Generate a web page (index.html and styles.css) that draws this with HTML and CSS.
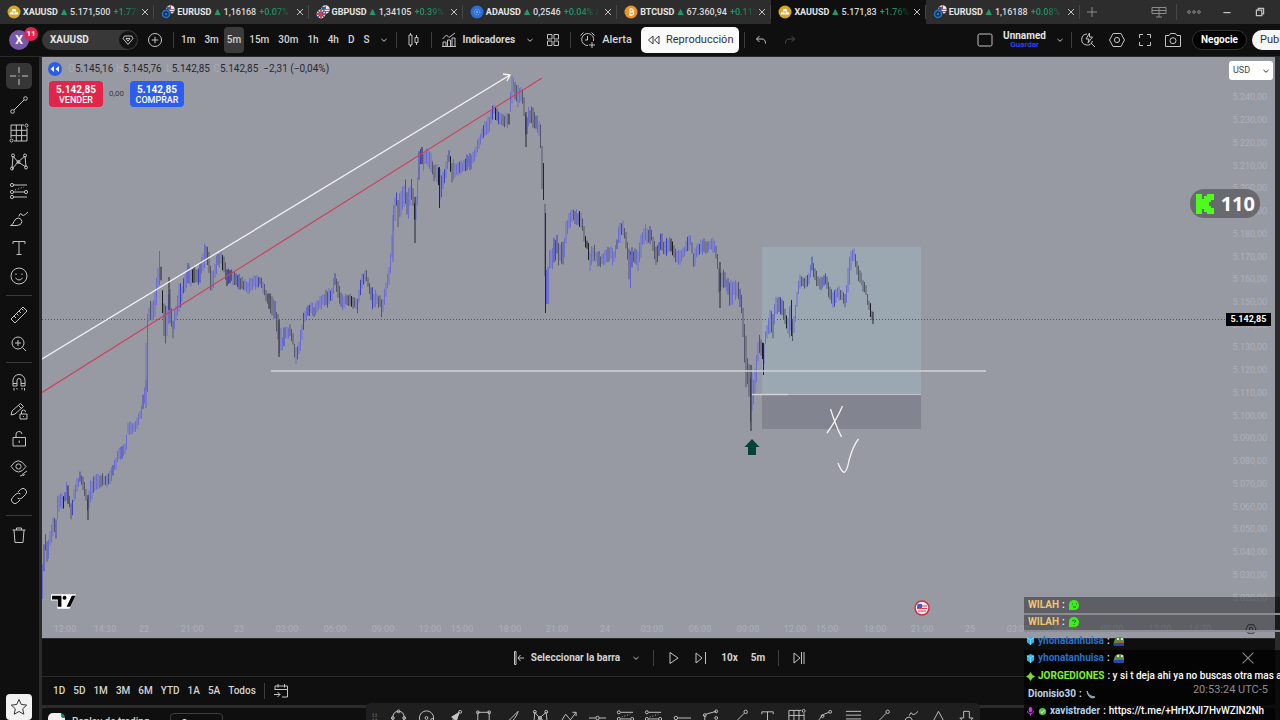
FILE: index.html
```html
<!DOCTYPE html>
<html lang="es">
<head>
<meta charset="utf-8">
<title>XAUUSD 5.171,83</title>
<link rel="stylesheet" href="styles.css">
</head>
<body>
<svg class="defs" aria-hidden="true">
  <symbol id="coin-gold" viewBox="0 0 14 14"><circle cx="7" cy="7" r="6.5" fill="#d3a52a"/><path d="M5.600 4h2.800l1 2.600H4.600zM3.300 7.200h3l.7 2.400H2.400zM7.700 7.200h3l.9 2.400H7z" fill="#fff"/></symbol>
  <symbol id="coin-eur" viewBox="0 0 14 14"><circle cx="9.500" cy="4.500" r="4.200" fill="#eee"/><path d="M9.500.4v4h4.200M8 6.500h5M9 8.300h3" stroke="#d8455a" fill="none"/><path d="M6 1.800h3.500v3H6z" fill="#3358a8"/><circle cx="5" cy="9" r="4.900" fill="#222"/><circle cx="5" cy="9" r="4.400" fill="#2272c9"/><circle cx="5" cy="9" r="2" fill="none" stroke="#12304f" stroke-width="1.400"/></symbol>
  <symbol id="coin-gbp" viewBox="0 0 14 14"><circle cx="9.500" cy="4.500" r="4.200" fill="#eee"/><path d="M9.500.8v3.600h4.200M8 6.500h5" stroke="#d8455a" fill="none"/><path d="M6 1.800h3.500v3H6z" fill="#3358a8"/><circle cx="5" cy="9" r="4.900" fill="#222"/><circle cx="5" cy="9" r="4.400" fill="#e9e4ee"/><path d="M5 4.600v8.800M.6 9h8.800" stroke="#d33c50" stroke-width="1.800"/><path d="M2 6l2 2M8 6L6 8M2 12l2-2M8 12l-2-2" stroke="#3c55a0" stroke-width="1.200"/></symbol>
  <symbol id="coin-ada" viewBox="0 0 14 14"><circle cx="7" cy="7" r="6.500" fill="#2b6ed6"/><circle cx="7" cy="7" r="2.800" fill="none" stroke="#8fb8f2" stroke-dasharray="1.200 1"/><circle cx="7" cy="7" r="1" fill="#8fb8f2"/></symbol>
  <symbol id="coin-btc" viewBox="0 0 14 14"><circle cx="7" cy="7" r="6.500" fill="#ea9526"/><path d="M5.400 4h2.400a1.300 1.300 0 0 1 0 2.700H5.600h2.500a1.500 1.500 0 0 1 0 3.100H5M6 4v6M7 3v1M7 10v1" fill="none" stroke="#fff" stroke-width="1.200"/></symbol>
  <symbol id="i-x" viewBox="0 0 10 10"><path d="M2 2l6 6M8 2L2 8"/></symbol>
  <symbol id="i-plus" viewBox="0 0 12 12"><path d="M6 1v10M1 6h10"/></symbol>
  <symbol id="i-chev" viewBox="0 0 8 8"><path d="M1.500 3L4 5.300 6.500 3"/></symbol>
  <symbol id="i-gem" viewBox="0 0 18 18"><path d="M5.500 5h7L14 7.500l-5 6-5-6zM7 7.500h4l-2 2.700z"/></symbol>
  <symbol id="i-addc" viewBox="0 0 16 16"><circle cx="8" cy="8" r="6.500"/><path d="M8 4.800v6.400M4.800 8h6.400"/></symbol>
  <symbol id="i-candle" viewBox="0 0 14 16"><path d="M3.500 1v2M3.500 13v2M2 3h3v10H2zM9.500 3v2.500M9.500 10.500V13M8 5.500h3v5H8z"/></symbol>
  <symbol id="i-ind" viewBox="0 0 16 16"><path d="M1.500 7l4-4 2.500 2.500 6-4.500M2 14.500V10h3v4.500zM6.500 14.500V8h3v6.500zM11 14.500V6h3v8.500zM1 14.500h14"/></symbol>
  <symbol id="i-grid" viewBox="0 0 14 14"><path d="M1.500 1.500H6V6H1.500zM8 1.500h4.500V6H8zM1.500 8H6v4.500H1.500zM8 8h4.500v4.500H8z"/></symbol>
  <symbol id="i-alarm" viewBox="0 0 18 18"><path d="M9 14.500A6 6 0 1 1 14.500 10M8.500 5v4H6M1.500 4.500l3-3M12.500 1.500l3 3M13 11v6M10 14h6"/></symbol>
  <symbol id="i-rew" viewBox="0 0 14 12"><path d="M6 2v8L1.500 6zM12 2v8L7.500 6z"/></symbol>
  <symbol id="i-undo" viewBox="0 0 12 12"><path d="M4.500 2L1.500 5l3 3M1.500 5H7q3.500 0 3.500 4.500"/></symbol>
  <symbol id="i-redo" viewBox="0 0 12 12"><path d="M7.500 2l3 3-3 3M10.500 5H5Q1.500 5 1.500 9.500"/></symbol>
  <symbol id="i-box" viewBox="0 0 16 14"><rect x="1" y="1" width="14" height="12" rx="1.500"/></symbol>
  <symbol id="i-qsearch" viewBox="0 0 16 16"><path d="M7 2a5.500 5.500 0 1 0 5.500 7M11 11l4 4M9.500 1L6 7h3l-1 4 4.500-6h-3z"/></symbol>
  <symbol id="i-hex" viewBox="0 0 18 16"><path d="M5 1.500h8L16.500 8 13 14.500H5L1.500 8z"/><circle cx="9" cy="8" r="2.600"/></symbol>
  <symbol id="i-full" viewBox="0 0 14 14"><path d="M1.500 5V1.500H5M9 1.500h3.500V5M12.500 9v3.500H9M5 12.500H1.500V9"/></symbol>
  <symbol id="i-cam" viewBox="0 0 18 16"><path d="M1.500 3.500H5l1.500-2h5l1.500 2h3.500v11h-15z"/><circle cx="9" cy="8.700" r="3"/></symbol>
  <symbol id="i-split" viewBox="0 0 16 12"><path d="M1 1.500h14v6H1zM1 4.500h14M8 1.500V11M5 11h6"/></symbol>
  <symbol id="i-dots" viewBox="0 0 14 6"><circle cx="2" cy="3" r="1.300"/><circle cx="7" cy="3" r="1.300"/><circle cx="12" cy="3" r="1.300"/></symbol>
  <symbol id="i-min" viewBox="0 0 10 10"><path d="M2 5.500h6"/></symbol>
  <symbol id="i-restore" viewBox="0 0 10 10"><path d="M2 3.500h4.500V8H2zM3.500 3.500V2H8v4.500H6.500"/></symbol>
  <symbol id="i-cross" viewBox="0 0 20 20"><path d="M10 1v6M10 13v6M1 10h6M13 10h6M9.500 10h1"/></symbol>
  <symbol id="i-line" viewBox="0 0 20 20"><circle cx="3.500" cy="16.500" r="1.800"/><circle cx="16.500" cy="3.500" r="1.800"/><path d="M5 15L15 5"/></symbol>
  <symbol id="i-gann" viewBox="0 0 20 20"><path d="M2 2h13M2 2v13M18 5v13M5 18h13M2 7.300h16M2 12.600h16M7.300 2v16M12.600 2v16"/><circle cx="17.500" cy="2.500" r="1.500"/><circle cx="2.500" cy="17.500" r="1.500"/></symbol>
  <symbol id="i-pattern" viewBox="0 0 20 20"><path d="M4 4L3 16M4 4l5 6M9 10l7-6M9 10L3 17M9 10l8 5M16 4l1 11"/><circle cx="4" cy="3.500" r="1.500"/><circle cx="3" cy="16.500" r="1.500"/><circle cx="9.500" cy="10" r="1.500"/><circle cx="16" cy="3.500" r="1.500"/><circle cx="17" cy="15.500" r="1.500"/></symbol>
  <symbol id="i-fib" viewBox="0 0 20 20"><circle cx="3" cy="4" r="1.600"/><circle cx="3" cy="11" r="1.600"/><circle cx="17" cy="11" r="1.600"/><circle cx="3" cy="16" r="1.600"/><path d="M5 4h13M5 11h10M5 16h13"/><path d="M6 9l9-3" stroke-dasharray="1 2"/></symbol>
  <symbol id="i-brush" viewBox="0 0 20 20"><path d="M1.500 16.500Q4 16 5 12.500 6.500 9 9.500 9q3 .5 3.500 3.500-.5 4-5 4zM10 7.500Q10 5 12 4.500 13.500 9 19 3"/></symbol>
  <symbol id="i-text" viewBox="0 0 20 20"><path d="M4 6V3.500h12V6M10 3.500v13M7.500 16.500h5"/></symbol>
  <symbol id="i-smile" viewBox="0 0 20 20"><circle cx="10" cy="10" r="8"/><path d="M7 7.500v1.500M13 7.500v1.500M6.500 12q3.500 4 7 0"/></symbol>
  <symbol id="i-ruler" viewBox="0 0 20 20"><path d="M2 14L14 2l4 4L6 18zM5 11l2 2M7.500 8.500l2 2M10 6l2 2M12.500 3.500l2 2"/></symbol>
  <symbol id="i-zoom" viewBox="0 0 20 20"><circle cx="9" cy="9" r="6"/><path d="M9 6v6M6 9h6M13.500 13.500L17 17"/></symbol>
  <symbol id="i-magnet" viewBox="0 0 20 20"><path d="M4 14V8.500a6 6 0 0 1 12 0V14h-4V8.500a2 2 0 0 0-4 0V14zM4 11.500h4M12 11.500h4M5 16v2.500M8 16v1.500M13 16v1.500M15.500 16v2.500"/></symbol>
  <symbol id="i-penlock" viewBox="0 0 20 20"><path d="M2 14l1-4 8.500-7.500 3 3L6 13zM9.500 4.500l3 3M11 13h7v5h-7zM12.500 13v-2a2 2 0 0 1 4 0M14.500 15v1"/></symbol>
  <symbol id="i-lock" viewBox="0 0 20 20"><path d="M4 8.500h12.500V17H4zM7 8.500V6a3 3 0 0 1 6-1M10.200 11.500v2.500"/></symbol>
  <symbol id="i-eye" viewBox="0 0 20 20"><path d="M2 8.500q7-11.500 15 0-7.500 11-15 0z"/><circle cx="9.500" cy="8.500" r="2.600"/><path d="M11 18q3 0 3-2.500 3 1 0 2.500M15 15l3-2"/></symbol>
  <symbol id="i-link" viewBox="0 0 20 20"><path d="M9 6l2.500-2.500a3.500 3.500 0 0 1 5 5L13 12q-2.500 2-4.500 0M11 14l-2.500 2.500a3.500 3.500 0 0 1-5-5L7 8q2.500-2 4.500 0"/></symbol>
  <symbol id="i-trash" viewBox="0 0 20 20"><path d="M3.500 5h13M7.500 5V3h5v2M5 5l1 12.500h8L15 5"/></symbol>
  <symbol id="i-star" viewBox="0 0 20 20"><path d="M10 2.500l2.300 5 5.400.6-4 3.700 1.100 5.400-4.800-2.700-4.800 2.700 1.100-5.400-4-3.700 5.400-.6z"/></symbol>
  <symbol id="i-selbar" viewBox="0 0 12 16"><path d="M1.500 1.500H3v13H1.500zM11 8H5M7.500 5L5 8l2.500 3"/></symbol>
  <symbol id="i-play" viewBox="0 0 14 14"><path d="M3 1.500L11 7l-8 5.500z"/></symbol>
  <symbol id="i-step" viewBox="0 0 14 14"><path d="M2 2l6 5-6 5zM11.500 1v12"/></symbol>
  <symbol id="i-end" viewBox="0 0 14 14"><path d="M2 2l6 5-6 5zM9.500 1v12M12 1v12"/></symbol>
  <symbol id="i-goto" viewBox="0 0 16 16"><path d="M2 7V3h12.500v11H9M2 6.500h12.500M5 1v3.500M11.500 1v3.500M1 11.500h6M4.500 9L7 11.500 4.500 14"/></symbol>
  <symbol id="i-path" viewBox="0 0 20 20"><path d="M4 10Q4 3 10 3t6 7q0 7-6 7t-6-7"/><circle cx="10" cy="3" r="1.500"/><circle cx="4" cy="10" r="1.500"/><circle cx="16" cy="10" r="1.500"/></symbol>
  <symbol id="i-circ" viewBox="0 0 20 20"><circle cx="10" cy="10" r="7.500"/><circle cx="10" cy="10" r="1.500"/><circle cx="16" cy="12" r="1.500"/></symbol>
  <symbol id="i-arrow" viewBox="0 0 20 20"><path d="M3 17L14 6"/><path d="M7 9l8-5-3 9z" fill="#c4c4c4"/><circle cx="16" cy="3.500" r="1.500"/></symbol>
  <symbol id="i-rect" viewBox="0 0 20 20"><path d="M4 4h12v12H4z"/><circle cx="4" cy="4" r="1.500"/><circle cx="16" cy="4" r="1.500"/></symbol>
  <symbol id="i-pen" viewBox="0 0 20 20"><path d="M4 16q0-3 4-4L17 3q-3 9-9 12-2 1-4 1"/></symbol>
  <symbol id="i-zig" viewBox="0 0 20 20"><path d="M2 14l5-8 5 6 6-8M14 4h4v4"/></symbol>
  <symbol id="i-hline" viewBox="0 0 20 20"><path d="M1 10h7M12 10h7"/><circle cx="10" cy="10" r="1.800"/></symbol>
  <symbol id="i-hray" viewBox="0 0 20 20"><path d="M5 10h14"/><circle cx="3" cy="10" r="1.800"/></symbol>
  <symbol id="i-fork" viewBox="0 0 20 20"><path d="M4 7v9h12M5 6l11-3"/><circle cx="4" cy="7" r="1.500"/><circle cx="16" cy="3" r="1.500"/><circle cx="16" cy="10" r="1.500"/></symbol>
  <symbol id="i-curve" viewBox="0 0 20 20"><path d="M3 16Q5 6 15 4"/><circle cx="3.500" cy="16.500" r="1.500"/><circle cx="8" cy="8" r="1.500"/><circle cx="16" cy="3.500" r="1.500"/></symbol>
  <symbol id="i-lines" viewBox="0 0 20 20"><path d="M2 3h16M2 7h16M2 11h16M2 15h16"/></symbol>
  <symbol id="i-tri" viewBox="0 0 20 20"><path d="M10 3l7 13H3z"/></symbol>
  <symbol id="i-down" viewBox="0 0 20 20"><path d="M7 3h6v7h4l-7 7-7-7h4z"/></symbol>
</svg>

<header class="tabs">
  <nav class="tab-list">
    <div class="tab"><svg class="coin"><use href="#coin-gold"/></svg><b>XAUUSD</b><i>▲</i><span>5.171,500</span><em>+1.77%</em><button aria-label="Cerrar"><svg class="ic s10"><use href="#i-x"/></svg></button></div>
    <div class="tab"><svg class="coin"><use href="#coin-eur"/></svg><b>EURUSD</b><i>▲</i><span>1,16168</span><em>+0.07%</em><button aria-label="Cerrar"><svg class="ic s10"><use href="#i-x"/></svg></button></div>
    <div class="tab"><svg class="coin"><use href="#coin-gbp"/></svg><b>GBPUSD</b><i>▲</i><span>1,34105</span><em>+0.39%</em><button aria-label="Cerrar"><svg class="ic s10"><use href="#i-x"/></svg></button></div>
    <div class="tab"><svg class="coin"><use href="#coin-ada"/></svg><b>ADAUSD</b><i>▲</i><span>0,2546</span><em>+0.04% /</em><button aria-label="Cerrar"><svg class="ic s10"><use href="#i-x"/></svg></button></div>
    <div class="tab"><svg class="coin"><use href="#coin-btc"/></svg><b>BTCUSD</b><i>▲</i><span>67.360,94</span><em>+0.11%</em><button aria-label="Cerrar"><svg class="ic s10"><use href="#i-x"/></svg></button></div>
    <div class="tab active"><svg class="coin"><use href="#coin-gold"/></svg><b>XAUUSD</b><i>▲</i><span>5.171,83</span><em>+1.76%</em><button aria-label="Cerrar"><svg class="ic s10"><use href="#i-x"/></svg></button></div>
    <div class="tab"><svg class="coin"><use href="#coin-eur"/></svg><b>EURUSD</b><i>▲</i><span>1,16188</span><em>+0.08%</em><button aria-label="Cerrar"><svg class="ic s10"><use href="#i-x"/></svg></button></div>
  </nav>
  <button class="tab-add" aria-label="Nueva pestaña"><svg class="ic s12 dim"><use href="#i-plus"/></svg></button>
  <div class="win">
    <button aria-label="Dividir"><svg class="ic w16 dim"><use href="#i-split"/></svg></button>
    <span class="sep"></span>
    <button aria-label="Más"><svg class="ic w14 dim"><use href="#i-dots"/></svg></button>
    <button aria-label="Minimizar"><svg class="ic s12"><use href="#i-min"/></svg></button>
    <button aria-label="Restaurar"><svg class="ic s12"><use href="#i-restore"/></svg></button>
  </div>
</header>

<div class="toolbar">
  <button class="avatar" aria-label="Perfil">X<span class="badge">11</span></button>
  <button class="symbol"><span>XAUUSD</span><svg class="ic s18"><use href="#i-gem"/></svg></button>
  <button class="add" aria-label="Comparar"><svg class="ic s16"><use href="#i-addc"/></svg></button>
  <span class="sep"></span>
  <div class="intervals"><button>1m</button><button>3m</button><button class="on">5m</button><button>15m</button><button>30m</button><button>1h</button><button>4h</button><button>D</button><button>S</button></div>
  <button class="chev" aria-label="Intervalos"><svg class="ic s8"><use href="#i-chev"/></svg></button>
  <span class="sep"></span>
  <button class="candles" aria-label="Velas"><svg class="ic s16"><use href="#i-candle"/></svg></button>
  <span class="sep"></span>
  <button class="ind"><svg class="ic s16"><use href="#i-ind"/></svg>Indicadores</button>
  <button class="chev2" aria-label="Favoritos"><svg class="ic s8"><use href="#i-chev"/></svg></button>
  <button class="layout" aria-label="Plantillas"><svg class="ic s14"><use href="#i-grid"/></svg></button>
  <span class="sep"></span>
  <button class="alert"><svg class="ic s18"><use href="#i-alarm"/></svg>Alerta</button>
  <button class="replay"><svg class="ic w14 ink"><use href="#i-rew"/></svg>Reproducción</button>
  <span class="sep near"></span>
  <button class="undo" aria-label="Deshacer"><svg class="ic s12"><use href="#i-undo"/></svg></button>
  <button class="redo" aria-label="Rehacer"><svg class="ic s12 faint"><use href="#i-redo"/></svg></button>
  <div class="right">
    <button aria-label="Diseño"><svg class="ic w16"><use href="#i-box"/></svg></button>
    <button class="save"><b>Unnamed</b><small>Guardar</small></button>
    <button aria-label="Menú"><svg class="ic s8"><use href="#i-chev"/></svg></button>
    <span class="sep"></span>
    <div class="acts">
      <button aria-label="Buscar"><svg class="ic s16"><use href="#i-qsearch"/></svg></button>
      <button aria-label="Ajustes"><svg class="ic w18"><use href="#i-hex"/></svg></button>
      <button aria-label="Pantalla completa"><svg class="ic s14"><use href="#i-full"/></svg></button>
      <button aria-label="Captura"><svg class="ic w18"><use href="#i-cam"/></svg></button>
    </div>
    <button class="trade">Negocie</button>
    <button class="publish">Publicar</button>
  </div>
</div>

<main class="work">
  <aside class="side">
    <div class="grp g8">
      <button class="on" aria-label="Cursor"><svg class="ic s20"><use href="#i-cross"/></svg></button>
      <button aria-label="Línea"><svg class="ic s20"><use href="#i-line"/></svg></button>
      <button aria-label="Gann"><svg class="ic s20"><use href="#i-gann"/></svg></button>
      <button aria-label="Patrones"><svg class="ic s20"><use href="#i-pattern"/></svg></button>
      <button aria-label="Previsión"><svg class="ic s20"><use href="#i-fib"/></svg></button>
      <button aria-label="Pincel"><svg class="ic s20"><use href="#i-brush"/></svg></button>
      <button aria-label="Texto"><svg class="ic s20"><use href="#i-text"/></svg></button>
      <button aria-label="Iconos"><svg class="ic s20"><use href="#i-smile"/></svg></button>
    </div>
    <hr>
    <div class="grp g2">
      <button aria-label="Medir"><svg class="ic s20"><use href="#i-ruler"/></svg></button>
      <button aria-label="Acercar"><svg class="ic s20"><use href="#i-zoom"/></svg></button>
    </div>
    <hr>
    <div class="grp g5">
      <button aria-label="Imán"><svg class="ic s20"><use href="#i-magnet"/></svg></button>
      <button aria-label="Modo dibujo"><svg class="ic s20"><use href="#i-penlock"/></svg></button>
      <button aria-label="Bloquear"><svg class="ic s20"><use href="#i-lock"/></svg></button>
      <button aria-label="Ocultar"><svg class="ic s20"><use href="#i-eye"/></svg></button>
      <button aria-label="Vincular"><svg class="ic s20"><use href="#i-link"/></svg></button>
    </div>
    <hr>
    <div class="grp"><button aria-label="Eliminar"><svg class="ic s20"><use href="#i-trash"/></svg></button></div>
    <button class="star" aria-label="Favoritos"><svg class="ic s20 ink"><use href="#i-star"/></svg></button>
  </aside>

  <div class="center">
    <section class="chart">
      <svg class="plot" viewBox="42 57 1233 581" preserveAspectRatio="none">
        <rect x="762" y="247" width="159" height="147" fill="#9ba7b1"/>
        <rect x="762" y="394" width="159" height="35" fill="#82848f"/>
        <path d="M42 319.500H1226" stroke="#50535b" stroke-dasharray="1 2"/>
        <g id="bars"></g>
        <path d="M271 371H986M752 394.500H788" stroke="#d0d2d7" stroke-width="1.300" fill="none"/>
        <path d="M788 394.500H921" stroke="#bcc3ca" fill="none"/>
        <path d="M42 359L510 75M503 74l7 1-3 6" stroke="#f2f3f5" stroke-width="1.300" fill="none"/>
        <path d="M42 392.500L542 78" stroke="#cf3f5c" stroke-width="1.200" fill="none"/>
        <path d="M752 439l7.500 8h-3.500v8h-8v-8h-3.500z" fill="#064239"/>
        <path d="M830.500 409q5 16 11 28M842.500 406q-6 14-15.500 27M838 463q3 8 6 9.500 3-1 5-12 4-15 9.500-21.500" stroke="#f4f4f6" stroke-width="1.300" fill="none"/>
      </svg>
      <div class="legend">
        <span class="rw"><svg viewBox="0 0 14 12"><path d="M6 3v6L2.500 6zM11 3v6L7.500 6z" fill="#fff"/></svg></span>
        <p><s>O</s>5.145,16<s>H</s>5.145,76<s>L</s>5.142,85<s>C</s>5.142,85<span>−2,31 (−0,04%)</span></p>
      </div>
      <div class="deal">
        <button class="sell"><b>5.142,85</b>VENDER</button>
        <span>0,00</span>
        <button class="buy"><b>5.142,85</b>COMPRAR</button>
      </div>
      <select class="cur" aria-label="Divisa"><option>USD</option></select>
      <svg class="curchev ic s8 ink"><use href="#i-chev"/></svg>
      <div class="prices">
        <span>5.240,00</span><span>5.230,00</span><span>5.220,00</span><span>5.210,00</span><span>5.200,00</span><span>5.190,00</span><span>5.180,00</span><span>5.170,00</span><span>5.160,00</span><span>5.150,00</span><span>5.140,00</span><span>5.130,00</span><span>5.120,00</span><span>5.110,00</span><span>5.100,00</span><span>5.090,00</span><span>5.080,00</span><span>5.070,00</span><span>5.060,00</span><span>5.050,00</span><span>5.040,00</span><span>5.030,00</span><span>5.020,00</span>
      </div>
      <div class="last">5.142,85</div>
      <div class="times">
        <span>12:00</span><span>14:30</span><span>22</span><span>21:00</span><span>23</span><span>03:00</span><span>06:00</span><span>09:00</span><span>12:00</span><span>15:00</span><span>18:00</span><span>21:00</span><span>24</span><span>03:00</span><span>06:00</span><span>09:00</span><span>12:00</span><span>15:00</span><span>18:00</span><span>21:00</span><span>25</span><span>03:00</span><span>06:00</span><span>09:00</span><span>12:00</span><span>14:30</span>
      </div>
      <svg class="tv" viewBox="0 0 26 16"><path d="M1 1h24l-6 14H7V7H1z" fill="#fff"/><path d="M2 2.500h9V13H7.500V6H2zM21 2.500h3.500L19.500 13H16z" fill="#000"/><circle cx="14" cy="4.300" r="1.900" fill="#000"/></svg>
      <svg class="flag" viewBox="0 0 16 16"><circle cx="8" cy="8" r="7" fill="#f3e9ee" stroke="#c92f45" stroke-width="1.500"/><path d="M3 8.500h10M4 11h8M8 6h5" stroke="#d64258" stroke-width="1.200"/><path d="M3.500 4H8v4H3z" fill="#3a5fc0"/></svg>
      <button class="axis-set" aria-label="Ajustes de escala"><svg class="ic s12"><use href="#i-hex"/></svg></button>
    </section>

    <div class="replaybar">
      <button class="pick"><svg class="ic s16"><use href="#i-selbar"/></svg>Seleccionar la barra<svg class="ic s8"><use href="#i-chev"/></svg></button>
      <span class="sep"></span>
      <button aria-label="Reproducir"><svg class="ic s14"><use href="#i-play"/></svg></button>
      <button aria-label="Avanzar"><svg class="ic s14"><use href="#i-step"/></svg></button>
      <button>10x</button>
      <button>5m</button>
      <span class="sep"></span>
      <button aria-label="Ir al final"><svg class="ic s14"><use href="#i-end"/></svg></button>
    </div>

    <div class="ranges">
      <button>1D</button><button>5D</button><button>1M</button><button>3M</button><button>6M</button><button>YTD</button><button>1A</button><button>5A</button><button>Todos</button>
      <span class="sep"></span>
      <button aria-label="Ir a la fecha"><svg class="ic s16"><use href="#i-goto"/></svg></button>
    </div>

    <div class="panel">
      <span class="face"></span>
      <span class="pname">Replay de trading</span>
      <button>Operar</button>
    </div>
  </div>
</main>

<div class="drawbar">
  <span class="grip">⠿</span>
  <button aria-label="Elipse"><svg class="ic s20"><use href="#i-path"/></svg></button>
  <button aria-label="Círculo"><svg class="ic s20"><use href="#i-circ"/></svg></button>
  <button aria-label="Flecha"><svg class="ic s20"><use href="#i-arrow"/></svg></button>
  <button aria-label="Rectángulo"><svg class="ic s20"><use href="#i-rect"/></svg></button>
  <button aria-label="Lápiz"><svg class="ic s20"><use href="#i-pen"/></svg></button>
  <button aria-label="Patrón"><svg class="ic s20"><use href="#i-pattern"/></svg></button>
  <button aria-label="Zigzag"><svg class="ic s20"><use href="#i-zig"/></svg></button>
  <button aria-label="Horizontal"><svg class="ic s20"><use href="#i-hline"/></svg></button>
  <button aria-label="Larga"><svg class="ic s20"><use href="#i-fib"/></svg></button>
  <button aria-label="Corta"><svg class="ic s20"><use href="#i-fib"/></svg></button>
  <button aria-label="Rayo horizontal"><svg class="ic s20"><use href="#i-hray"/></svg></button>
  <button aria-label="Tridente"><svg class="ic s20"><use href="#i-fork"/></svg></button>
  <button aria-label="Tendencia"><svg class="ic s20"><use href="#i-line"/></svg></button>
  <button aria-label="Texto"><svg class="ic s20"><use href="#i-text"/></svg></button>
  <button aria-label="Gann"><svg class="ic s20"><use href="#i-gann"/></svg></button>
  <button aria-label="Curva"><svg class="ic s20"><use href="#i-curve"/></svg></button>
  <button aria-label="Fibonacci"><svg class="ic s20"><use href="#i-lines"/></svg></button>
  <button aria-label="Línea"><svg class="ic s20"><use href="#i-line"/></svg></button>
  <button aria-label="Pincel"><svg class="ic s20"><use href="#i-brush"/></svg></button>
  <button aria-label="Triángulo"><svg class="ic s20"><use href="#i-tri"/></svg></button>
  <button aria-label="Flecha abajo"><svg class="ic s20"><use href="#i-down"/></svg></button>
</div>

<div class="viewers"><svg viewBox="0 0 18 20"><path d="M0 0h6v5h2V2h3V0h7v6h-3v2h-2v4h2v2h3v6h-7v-2H8v-3H6v5H0z" fill="#4dfc1c"/></svg>110</div>

<div class="chat">
  <p class="shade"><b class="gold">WILAH</b> : <svg viewBox="0 0 12 12"><path d="M1 11V5q1-4 5-4t5 5q0 5-5 5z" fill="#3dee18"/><path d="M4 5h1M8 5h1M5 8h3" stroke="#137a0a"/></svg></p>
  <p class="shade"><b class="gold">WILAH</b> : <svg viewBox="0 0 12 12"><path d="M1 11V5q1-4 5-4t5 5q0 5-5 5z" fill="#3dee18"/><path d="M4 5q3-2 4 0L6 7M6 8v1" stroke="#137a0a" fill="none"/></svg></p>
  <p class="clear"><svg class="lead" viewBox="0 0 10 10"><path d="M5 0l4 2v5L5 10 1 7V2z" fill="#2fb4f0"/><path d="M1 2l4 2 4-2M5 4v6" stroke="#7fdcff" fill="none"/></svg><b class="blue">yhonatanhuisa</b> : <svg viewBox="0 0 12 12"><path d="M1 7q1-5 5-5 6-1 5 6H1z" fill="#5f8f3e"/><path d="M0 8h11v3H1z" fill="#2447b8"/><path d="M4 4h2M8 4h2" stroke="#fff" stroke-width="1.500"/><path d="M4 7.500h6" stroke="#a8553a"/></svg></p>
  <p><svg class="lead" viewBox="0 0 10 10"><path d="M5 0l4 2v5L5 10 1 7V2z" fill="#2fb4f0"/><path d="M1 2l4 2 4-2M5 4v6" stroke="#7fdcff" fill="none"/></svg><b class="blue">yhonatanhuisa</b> : <svg viewBox="0 0 12 12"><path d="M1 7q1-5 5-5 6-1 5 6H1z" fill="#5f8f3e"/><path d="M0 8h11v3H1z" fill="#2447b8"/><path d="M4 4h2M8 4h2" stroke="#fff" stroke-width="1.500"/><path d="M4 7.500h6" stroke="#a8553a"/></svg></p>
  <p><svg class="lead" viewBox="0 0 10 10"><path d="M5 0l2 3 3 2-3 2-2 3-2-3-3-2 3-2z" fill="#7ddc2c"/></svg><b class="green">JORGEDIONES</b> : y si t deja ahi ya no buscas otra mas arriba</p>
  <p><b class="pale">Dionisio30</b> : <svg viewBox="0 0 12 12"><path d="M2 3q1 4 4 5l4 1-2 1q-5 0-6-7" fill="#6f8791" stroke="#9fb2b8"/></svg></p>
  <p><svg class="lead" viewBox="0 0 10 10"><rect x="3" y="0" width="4" height="6" rx="2" fill="#c13be8"/><path d="M1.500 4.500q0 3 3.500 3t3.500-3M5 7v3" stroke="#c13be8" fill="none"/></svg><svg class="lead" viewBox="0 0 10 10"><circle cx="5" cy="5" r="4" fill="#54c83a"/><path d="M3 5l1.500 1.500L7 3.500" stroke="#fff" fill="none"/></svg><b class="sky">xavistrader</b> : <a href="#">https://t.me/+HrHXJI7HvWZIN2Nh</a></p>
  <button class="close" aria-label="Cerrar"><svg class="ic s16 dim"><use href="#i-x"/></svg></button>
  <span class="clock">20:53:24 UTC-5</span>
</div>
<script src="chart.js"></script>
</body>
</html>
```
FILE: styles.css
```css
* { box-sizing: border-box; }
body {
  margin: 0;
  height: 100vh;
  display: flex;
  flex-direction: column;
  overflow: hidden;
  position: relative;
  background: #2b2b2b;
  color: #d4d4d4;
  font: 500 10px/12px Roboto, sans-serif;
}
button {
  margin: 0; padding: 0; border: 0;
  background: none; color: inherit; font: inherit;
  display: flex; align-items: center; justify-content: center;
  flex: none; white-space: nowrap;
}
p { margin: 0; }
.defs { position: absolute; width: 0; height: 0; }
.ic { fill: none; stroke: #c4c4c4; stroke-width: 1; flex: none; display: block; }
.ink { stroke: #333; }
.dim { stroke: #8c8c8c; }
.faint { stroke: #4c4c4c; }
.s8 { width: 8px; height: 8px; }
.s10 { width: 10px; height: 10px; }
.s12 { width: 12px; height: 12px; }
.s14 { width: 14px; height: 14px; }
.s16 { width: 16px; height: 16px; }
.s18 { width: 18px; height: 18px; }
.s20 { width: 20px; height: 20px; }
.w14 { width: 14px; height: 12px; }
.w16 { width: 16px; height: 14px; }
.w18 { width: 18px; height: 16px; }
.sep { width: 1px; height: 16px; background: #3c3c3c; flex: none; }

.tabs { height: 24px; flex: none; display: flex; background: #2d2d2d; font-size: 9px; }
.tab-list { display: flex; flex: 0 1 1080px; min-width: 0; }
.tab { flex: 1 1 0; min-width: 0; display: flex; align-items: center; padding: 0 4px 0 7px; position: relative; }
.tab::after { content: ""; position: absolute; right: 0; top: 5px; height: 14px; width: 1px; background: #474747; }
.tab.active { background: #0f0f0f; }
.coin { width: 14px; height: 14px; flex: none; margin-right: 2px; }
.tab b { font-weight: 700; color: #e6e6e6; }
.tab i { font: 8px/12px "DejaVu Sans", sans-serif; color: #219a6b; margin: 0 3px; }
.tab span { color: #dcdcdc; }
.tab em {
  flex: 1; min-width: 0; overflow: hidden; white-space: nowrap;
  font-style: normal; color: #1f9a68; margin-left: 3px;
  -webkit-mask-image: linear-gradient(90deg, #000 40%, transparent 100%);
  mask-image: linear-gradient(90deg, #000 40%, transparent 100%);
}
.tab-add { width: 24px; }
.win { margin-left: auto; display: flex; align-items: center; gap: 11px; padding-right: 9px; }
.win button { width: 22px; height: 24px; }
.win .sep { background: #474747; margin: 0 -5px; }

.toolbar { height: 32px; flex: none; display: flex; align-items: center; background: #0f0f0f; padding-left: 9px; }
.avatar { width: 20px; height: 20px; border-radius: 50%; background: #7659a8; color: #fff; font: 700 12px/20px Roboto, sans-serif; position: relative; margin-right: 13px; }
.badge { position: absolute; left: 15px; top: -3px; width: 14px; height: 14px; border-radius: 50%; background: #e0244c; font: 700 8px/14px Roboto, sans-serif; text-align: center; }
.symbol { width: 96px; height: 20px; border-radius: 10px; background: #383838; justify-content: space-between; padding: 0 1px 0 8px; color: #e6e6e6; font-weight: 700; }
.symbol .ic { background: #141414; border-radius: 50%; }
.add { margin: 0 10px 0 9px; }
.intervals { display: flex; margin: 0 5px 0 3px; gap: 1px; }
.intervals button { padding: 0 4px; height: 26px; }
.intervals .on { background: #3b3b3b; border-radius: 4px; padding: 0 3px; }
.chev { margin: 0 8px 0 2px; }
.candles { margin: 0 9px; }
.ind { margin-left: 9px; gap: 5px; font-weight: 700; }
.alert { font-size: 11px; }
.chev2 { margin: 0 12px 0 11px; }
.layout { margin-right: 10px; }
.alert { gap: 5px; margin: 0 9px 0 8px; }
.replay { height: 26px; border-radius: 5px; background: #fafafa; color: #333; padding: 0 6px; gap: 5px; font-size: 11px; font-weight: 400; }
.near { margin: 0 10px 0 5px; }
.redo { margin-left: 17px; }
.right { margin-left: auto; display: flex; align-items: center; gap: 10px; }
.save { flex-direction: column; color: #e4e4e4; }
.save b { font-weight: 700; line-height: 10px; }
.save small { font-size: 8px; line-height: 8px; color: #2f4bff; }
.right > .sep { margin: 0 -2px 0 -3px; }
.acts { display: flex; gap: 12px; }
.trade, .publish { height: 20px; border-radius: 10px; padding: 0 8px; }
.trade { background: #000; border: 1px solid #333; color: #fff; font-weight: 700; }
.publish { background: #f6f6f6; color: #333; margin: 0 -28px 0 -5px; font-size: 11px; font-weight: 400; }

.work { flex: 1; min-height: 0; display: flex; margin-top: 1px; }
.side { width: 39px; flex: none; background: #0f0f0f; display: flex; flex-direction: column; align-items: center; padding: 5px 1px 0 0; }
.side hr { width: 26px; height: 1px; border: 0; background: #3a3a3a; margin: 4px 0 5px; flex: none; }
.grp { display: grid; grid-auto-rows: 1fr; justify-items: center; }
.g8 { height: 229px; }
.g2 { height: 57px; }
.g5 { height: 143px; }
.grp button { width: 26px; height: 28px; }
.grp .on { background: #363636; border-radius: 5px; height: 26px; align-self: center; }
.star { width: 26px; height: 26px; border-radius: 4px; background: #f2f2f2; margin: auto 0 0; }
.center { flex: 1; min-width: 0; display: flex; flex-direction: column; margin: 0 5px 0 3px; }

.chart { flex: 1; min-height: 0; position: relative; background: #989aa3; overflow: hidden; }
.plot { position: absolute; width: 100%; height: 100%; }
.legend { position: absolute; left: 6px; top: 5px; display: flex; align-items: center; color: #26282e; font-weight: 400; }
.rw { width: 14px; height: 14px; border-radius: 50%; background: #2a5bea; display: flex; align-items: center; }
.legend p { display: flex; }
.legend s { text-decoration: none; color: #a8abb4; width: 10px; text-align: right; }
.legend s:first-child { width: 13px; }
.legend p span { margin-left: 5px; }
.deal { position: absolute; left: 7px; top: 24px; display: flex; align-items: center; color: #3a3c42; font-size: 8px; font-weight: 400; }
.deal button { flex-direction: column; width: 54px; height: 26px; border-radius: 4px; color: #fff; font-size: 9px; font-weight: 500; line-height: 10px; }
.deal button b { font-size: 10px; font-weight: 700; line-height: 11px; }
.sell { background: #e3244b; }
.buy { background: #2b5df0; }
.deal span { width: 27px; text-align: center; }
.cur { position: absolute; right: 2px; top: 4px; width: 44px; height: 19px; border: 0; border-radius: 3px; background: #fff; color: #444; font: 400 9px/19px Roboto, sans-serif; appearance: none; padding: 0 4px; }
.curchev { position: absolute; right: 5px; top: 10px; }
.prices { position: absolute; right: 8px; top: 5%; bottom: 5%; display: flex; flex-direction: column; color: #adb0b9; font-weight: 400; font-size: 9px; }
.prices span { flex: 1; display: flex; align-items: center; }
.last { position: absolute; right: 4px; top: 44%; width: 45px; height: 13px; background: #000; color: #fff; font: 700 9px/13px Roboto, sans-serif; text-align: center; }
.times {
  position: absolute; left: 0; right: 61px; bottom: 3px;
  display: grid;
  grid-template-columns: 37fr 40fr 39fr 48fr 47fr 48fr 48fr 48fr 47fr 32fr 48fr 47fr 48fr 47fr 48fr 48fr 47fr 32fr 48fr 47fr 48fr 48fr 47fr 47fr 48fr 40fr;
  color: #adb0b9; font-size: 9px; font-weight: 400;
}
.times span { justify-self: end; width: 28px; text-align: center; }
.tv { position: absolute; left: 8px; bottom: 28px; width: 27px; height: 17px; }
.flag { position: absolute; left: 71%; bottom: 22px; width: 16px; height: 16px; margin-left: -3px; }
.axis-set { position: absolute; right: 18px; bottom: 3px; }
.axis-set .ic { stroke: #111; }

.replaybar { height: 37px; flex: none; margin-top: 1px; background: #0f0f0f; display: flex; align-items: center; justify-content: center; gap: 13px; font-weight: 700; }
.pick { gap: 4px; }
.pick .s8 { margin-left: 8px; }
.ranges { height: 28px; flex: none; margin-top: 1px; background: #0f0f0f; display: flex; align-items: center; gap: 8px; padding-left: 11px; }
.panel { height: 12px; flex: none; margin-top: 3px; background: #0f0f0f; display: flex; align-items: flex-start; padding: 5px 0 0 6px; overflow: hidden; border-radius: 3px 3px 0 0; }
.face { width: 17px; height: 18px; border-radius: 5px; background: radial-gradient(circle at 16px 2px, #19915f 3px, transparent 3px), #f0f0f0; flex: none; margin-right: 7px; }
.pname { margin-top: 3px; line-height: 12px; }
.panel button { margin-left: 20px; width: 53px; height: 22px; border: 1px solid #3d3d3d; border-radius: 4px; flex: none; }

.drawbar { position: absolute; left: 28.6%; width: 48%; bottom: -13px; height: 30px; display: flex; align-items: center; justify-content: space-between; padding: 0 4px 0 5px; background: #1f1f1f; border-radius: 5px; z-index: 1; }
.drawbar .s20 { width: 19px; height: 20px; }
.grip { width: 8px; color: #555; }

.viewers { position: absolute; right: 20px; top: 26%; margin-top: 2px; height: 29px; border-radius: 14px; background: #696a70; display: flex; align-items: center; gap: 7px; padding: 0 5px 0 6px; color: #fff; font: 700 20px/29px "Noto Sans", sans-serif; z-index: 2; }
.viewers svg { width: 18px; height: 20px; }

.chat { position: absolute; left: 80%; right: 0; bottom: 0; height: 123px; display: grid; grid-auto-rows: 1fr; overflow: hidden; color: #fff; z-index: 2; }
.chat p { display: flex; align-items: center; padding-left: 4px; gap: 3px; white-space: nowrap; background: rgba(0, 0, 0, 0.7); }
.chat p.shade { background: rgba(0, 0, 0, 0.38); border-bottom: 2px solid #8c8d92; }
.chat p.clear { background: none; }
.chat svg { width: 12px; height: 12px; flex: none; }
.chat .lead { width: 9px; height: 9px; margin-left: -2px; }
.chat .lead + b, .chat .lead + .lead { margin-left: 0; }
.chat a { color: #fff; text-decoration: none; }
.gold { color: #f3c56f; }
.blue { color: #2a72c8; }
.green { color: #7df03a; }
.pale { color: #bcd3e8; }
.sky { color: #a9d3ef; }
.chat .close { position: absolute; right: 23px; bottom: 53px; }
.chat .close svg { width: 18px; height: 18px; stroke-width: 0.6; }
.clock { position: absolute; right: 12px; bottom: 24px; color: #8e8e8e; font-size: 11px; font-weight: 400; }
```
FILE: chart.js
```js
// Envelope of the price series: x, high, low in plot units.
const series = [
  [42,575,600],[43.5,550,592],[45,526,553],[47,537,562],[49,533,557],[53,517,535],[56,520,537],[58,490,520],[60,493,508],[64,495,508],[67,478,497],[70,497,512],[71.5,503,520],[74,490,503],[77,480,492],[80,472,483],[84,480,492],[87,493,508],[88,500,520],[90,480,510],[93,477,492],[100,475,486],[107,475,486],[110,470,483],[114,462,473],[119,448,460],[124,446,456],[127,433,450],[128,419,437],[130,422,434],[135,422,432],[139,414,423],[142,400,417],[145,383,402],[146.5,325,385],[148,306,330],[150,303,323],[153,298,320],[156,280,313],[159,252,283],[161,262,285],[162,272,310],[164,300,342],[166.5,308,348],[169,277,317],[171,305,327],[173,315,337],[176,303,325],[179,283,317],[183,282,298],[188,264,286],[193,267,284],[198,268,285],[202,255,277],[204,242,268],[208,244,264],[211,268,298],[214,268,285],[217,253,270],[221,252,264],[224,258,276],[227,268,288],[230,270,282],[237,274,286],[243,278,293],[248,281,293],[253,277,289],[260,276,286],[264,283,296],[269,293,310],[272,297,320],[275,300,322],[279,320,357],[282,333,356],[286,326,338],[290,326,338],[293,332,348],[295,343,365],[298,343,360],[301,328,350],[303,316,333],[306,307,319],[311,302,314],[314,306,318],[320,296,309],[325,292,306],[327,286,308],[330,291,304],[333,282,298],[335,271,284],[338,282,298],[341,294,310],[346,294,306],[353,297,308],[358,297,312],[361,274,294],[366,268,282],[369,279,293],[372,288,311],[376,292,306],[380,297,308],[382,300,318],[385,288,305],[389,265,284],[392,233,260],[394,193,228],[397,188,204],[398,197,232],[401,193,218],[405,180,208],[408,187,220],[411,178,203],[414,193,208],[415,197,242],[417,183,220],[419,148,184],[421,144,158],[423,150,170],[428,147,168],[432,157,173],[434,162,187],[438,162,178],[439.5,167,207],[442,177,197],[446,160,178],[449,152,164],[452,158,184],[456,162,174],[462,162,174],[467,154,169],[472,153,169],[476,146,156],[480,132,146],[486,121,134],[490,116,130],[493.5,101,115],[496,109,121],[502,114,124],[507,115,127],[510,108,130],[511,75,107],[514,75,94],[517,86,109],[520,84,101],[523,91,104],[526,110,147],[529,107,124],[532,103,130],[536,114,129],[540,123,141],[541.5,130,185],[543.5,160,200],[544.5,180,245],[545.5,213,313],[546.5,270,312],[548,265,303],[549.5,248,274],[552,243,272],[554,236,264],[557,230,262],[560,242,266],[564,244,266],[565.5,221,247],[569,215,228],[573,208,223],[577,211,224],[582,214,231],[585,232,246],[588,242,253],[589.5,250,277],[593,244,263],[597,251,264],[600,253,270],[605,251,263],[610,246,259],[614,246,267],[617,236,253],[620,221,241],[623,222,234],[626,232,248],[627.5,243,264],[630,250,288],[633,248,263],[638,250,270],[641,233,256],[644,225,243],[648,226,244],[651,226,241],[654,242,256],[657,245,267],[661,230,247],[664,242,259],[670,234,251],[674,246,258],[678,249,266],[683,248,259],[686,242,253],[691,231,247],[693.5,248,272],[697,246,258],[702,239,253],[708,242,252],[712,237,249],[717,247,259],[719.5,260,308],[723,269,288],[728,279,294],[729.5,283,313],[733,278,301],[737,281,298],[741,287,308],[743,303,340],[744,308,358],[746.5,338,393],[749,357,397],[750.5,365,431],[752.5,377,416],[755,367,394],[757,347,381],[759,327,354],[762,343,358],[763.5,343,375],[765,332,344],[770,310,334],[773,316,337],[776,292,314],[780,296,314],[784,303,321],[787.5,316,337],[791,300,337],[793,323,345],[795,312,331],[798,280,298],[800,272,288],[805,278,289],[809,272,284],[812,258,271],[815,268,281],[818.5,278,289],[822,279,291],[825,273,284],[829,283,298],[832.5,293,310],[837,286,299],[842,290,299],[845.5,295,310],[848.5,257,291],[852,249,264],[855,251,263],[858,265,279],[862,276,288],[866,286,296],[869,300,311],[873,312,324]
];

const noise = n => {
  const v = Math.sin(n * 127.1) * 43758.5453;
  return v - Math.floor(v);
};

const makeBar = (x, top, bottom, color) => {
  const line = document.createElementNS("http://www.w3.org/2000/svg", "line");
  line.setAttribute("x1", x);
  line.setAttribute("x2", x);
  line.setAttribute("y1", top);
  line.setAttribute("y2", bottom);
  line.setAttribute("stroke", color);
  return line;
};

const bars = document.getElementById("bars");
let seg = 0;
for (let i = 0, x = 42.5; x <= 873; i++, x += 1.5) {
  while (seg < series.length - 2 && series[seg + 1][0] < x) seg++;
  const [x0, h0, l0] = series[seg];
  const [x1, h1, l1] = series[seg + 1];
  const t = (x - x0) / (x1 - x0);
  const hi = h0 + (h1 - h0) * t;
  const lo = l0 + (l1 - l0) * t;
  const slope = (h1 + l1 - h0 - l0) / (x1 - x0);
  const span = lo - hi;
  const top = hi - 2 + noise(i) * span * 0.35;
  const bottom = lo + 2 - noise(i + 900) * span * 0.35;
  const falling = noise(i + 300) * 10 - 5 + slope > 1.5;
  const dark = noise(i + 70) > 0.85 ? "#1c1e26" : "#54576a";
  const blue = noise(i + 40) > 0.8 ? "#3c40c4" : "#6a6dd6";
  bars.append(makeBar(x, top, bottom, falling ? dark : blue));
}

// Long single bars that stand out from the series.
[
  [88,495,520],[169,277,310],[279,320,357],[415,197,243],[439.500,167,208],[526,112,147],[543.500,163,200],[545.500,213,313],
  [720,262,308],[763.500,343,375],[791.500,300,336],[751,365,431],[873,312,324]
].forEach(([x, top, bottom]) => bars.append(makeBar(x, top, bottom, "#25272e")));

[
  [147.500,318,392],[146,380,408],[159.500,251,285],[393,215,262],[630.500,255,288],[546.500,270,303],[548,268,304]
].forEach(([x, top, bottom]) => bars.append(makeBar(x, top, bottom, "#6063d4")));
```
